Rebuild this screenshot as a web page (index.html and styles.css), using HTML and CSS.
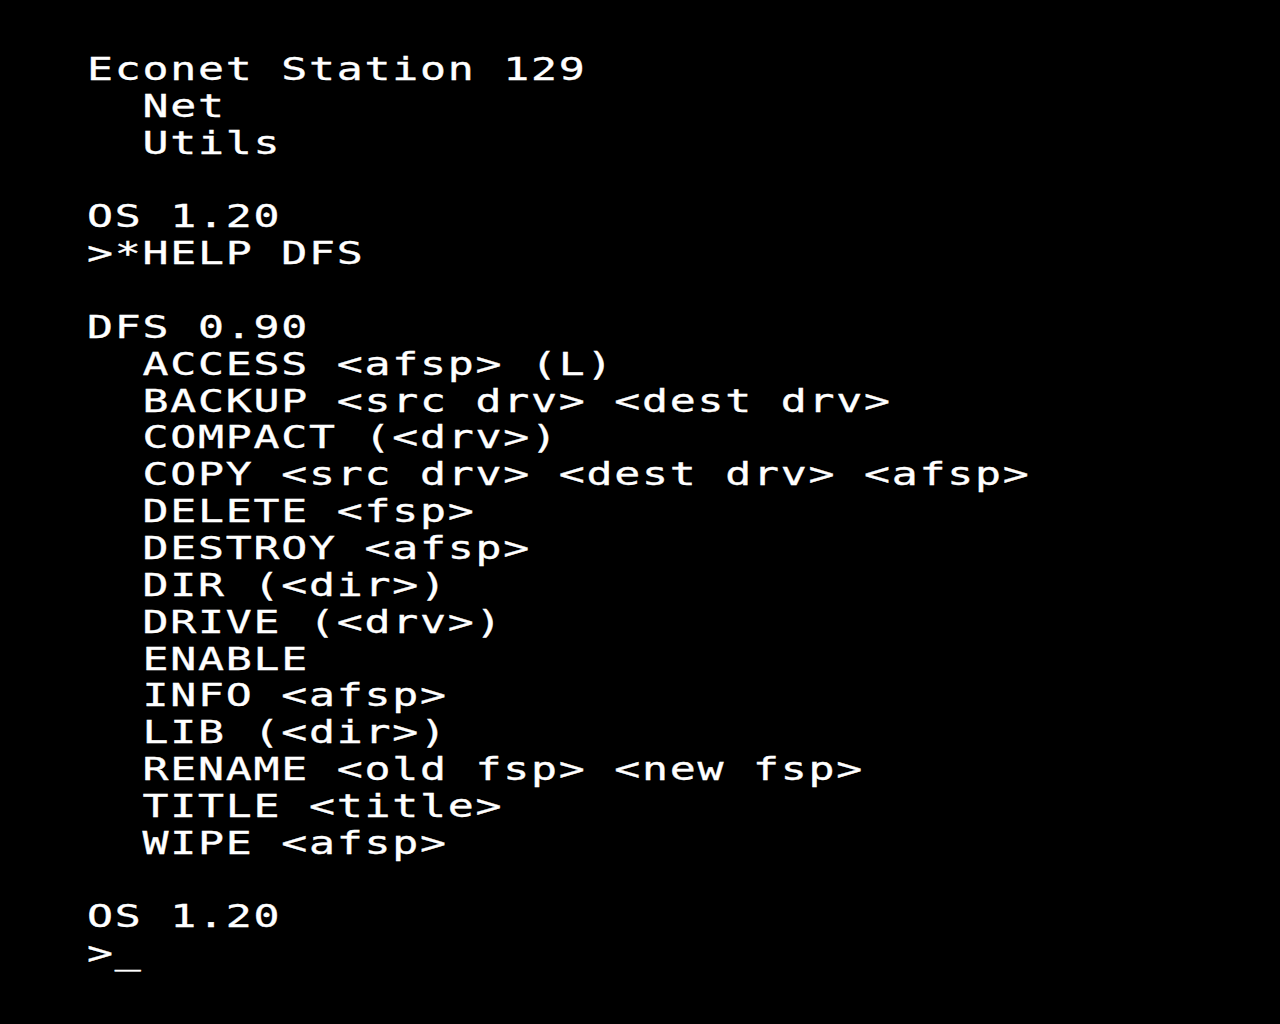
FILE: index.html
```html
<!DOCTYPE html>
<html>
<head>
<meta charset="utf-8">
<link rel="stylesheet" href="styles.css">
</head>
<body>
<main class="screen">
<div class="text">Econet Station 129
  Net
  Utils

OS 1.20
&gt;*HELP DFS

DFS 0.90
  ACCESS &lt;afsp&gt; (L)
  BACKUP &lt;src drv&gt; &lt;dest drv&gt;
  COMPACT (&lt;drv&gt;)
  COPY &lt;src drv&gt; &lt;dest drv&gt; &lt;afsp&gt;
  DELETE &lt;fsp&gt;
  DESTROY &lt;afsp&gt;
  DIR (&lt;dir&gt;)
  DRIVE (&lt;drv&gt;)
  ENABLE
  INFO &lt;afsp&gt;
  LIB (&lt;dir&gt;)
  RENAME &lt;old fsp&gt; &lt;new fsp&gt;
  TITLE &lt;title&gt;
  WIPE &lt;afsp&gt;

OS 1.20
&gt;_</div>
</main>
</body>
</html>
```
FILE: styles.css
```css
html, body {
  margin: 0;
  padding: 0;
  background: #000;
  width: 1280px;
  height: 1024px;
  overflow: hidden;
}
.screen {
  padding: 51px 0 0 87px;
  overflow: hidden;
}
.text {
  width: 820px;
  white-space: pre;
  color: #fff;
  font-family: "DejaVu Sans Mono", "Liberation Mono", monospace;
  font-weight: normal;
  font-size: 32px;
  line-height: 36.85px;
  letter-spacing: 1.29px;
  -webkit-text-stroke: 0.35px #fff;
  transform: scaleX(1.35);
  transform-origin: 0 0;
}
```
